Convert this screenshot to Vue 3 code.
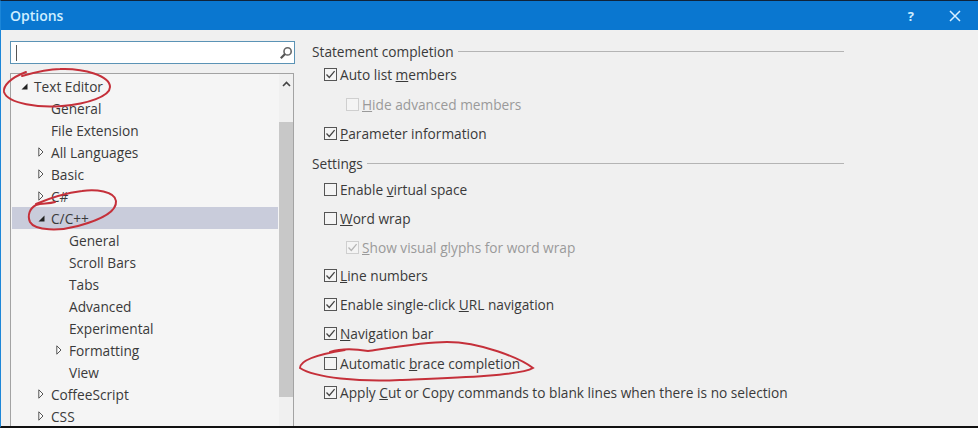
<template>
  <div class="dialog">
    <header class="titlebar">
      <span class="title">Options</span>
      <span class="help">?</span>
      <svg class="close" viewBox="0 0 12 12" width="12" height="12">
        <path d="M1 1l10 10M11 1L1 11" stroke="#d8f0ff" stroke-width="1.5" fill="none"/>
      </svg>
    </header>

    <div class="content">
      <aside class="left">
        <div class="search">
          <span class="caret"></span>
          <svg class="search-icon" viewBox="0 0 14 14" width="14" height="14">
            <circle cx="8.6" cy="5.4" r="3.6" fill="none" stroke="#666" stroke-width="1.6"/>
            <path d="M6 8L1.8 12.2" stroke="#555" stroke-width="2.2" fill="none"/>
          </svg>
        </div>

        <div class="tree">
          <div class="tree-list">
            <div
              v-for="node in nodes"
              :key="node.id"
              class="node"
              :class="['level-' + node.level, { selected: node.selected }]"
            >
              <span class="arrow-cell">
                <svg v-if="node.arrow === 'open'" viewBox="0 0 7 7" width="7" height="7">
                  <path d="M6.5 0.5V6.5H0.5z" fill="#222"/>
                </svg>
                <svg v-else-if="node.arrow === 'closed'" viewBox="0 0 6 10" width="6" height="10">
                  <path d="M0.8 0.8L5 5L0.8 9.2z" fill="#fff" stroke="#555" stroke-width="1"/>
                </svg>
              </span>
              <span class="node-label">{{ node.label }}</span>
            </div>
          </div>
          <div class="scrollbar">
            <svg class="scroll-up" viewBox="0 0 9 6" width="9" height="6">
              <path d="M1 5l3.5-3.5L8 5" fill="none" stroke="#444" stroke-width="1.6"/>
            </svg>
            <div class="thumb"></div>
          </div>
        </div>
      </aside>

      <main class="right">
        <template v-for="group in groups" :key="group.title">
          <div class="group-title" :class="group.cls">
            <span>{{ group.title }}</span>
            <span class="rule"></span>
          </div>
          <div
            v-for="opt in group.options"
            :key="opt.pre + opt.key + opt.post"
            class="option"
            :class="{ sub: opt.sub, disabled: opt.sub, tall: opt.tall, short: opt.short }"
          >
            <span class="box">
              <svg v-if="opt.checked" viewBox="0 0 11 11" width="11" height="11">
                <path d="M1.5 5.5L4.3 8.5L9.6 2.2" fill="none" :stroke="opt.sub ? '#b5b5b5' : '#444'" stroke-width="1.3"/>
              </svg>
            </span>
            <span class="option-label">{{ opt.pre }}<u>{{ opt.key }}</u>{{ opt.post }}</span>
          </div>
        </template>
      </main>
    </div>

    <!-- hand drawn red marks on top of the screenshot -->
    <svg class="marks" viewBox="0 0 978 428" width="978" height="428">
      <path d="M26 72C10 78 3 86 4 92C8 104 40 108 62 106C88 104 110 96 110 87C110 76 84 68 60 69C48 69 36 72 22 76"/>
      <path d="M55 202C48 204 42 203 36 205C30 208 27 215 30 222C35 231 60 231 78 226C100 220 117 212 116 201C115 191 95 189 82 191C66 193 50 198 36 204"/>
      <path d="M330 352C342 348 356 349 368 351C395 347 425 342 447 342C480 342 520 358 533 368C520 376 450 378 400 380C360 382 315 378 300 368C300 360 320 354 345 350"/>
    </svg>
  </div>
</template>

<script setup>
const nodes = [
  { label: 'Text Editor', level: 0, arrow: 'open' },
  { label: 'General', level: 1 },
  { label: 'File Extension', level: 1 },
  { label: 'All Languages', level: 1, arrow: 'closed' },
  { label: 'Basic', level: 1, arrow: 'closed' },
  { label: 'C#', level: 1, arrow: 'closed' },
  { label: 'C/C++', level: 1, arrow: 'open', selected: true },
  { label: 'General', level: 2 },
  { label: 'Scroll Bars', level: 2 },
  { label: 'Tabs', level: 2 },
  { label: 'Advanced', level: 2 },
  { label: 'Experimental', level: 2 },
  { label: 'Formatting', level: 2, arrow: 'closed' },
  { label: 'View', level: 2 },
  { label: 'CoffeeScript', level: 1, arrow: 'closed' },
  { label: 'CSS', level: 1, arrow: 'closed' }
].map((n, i) => ({ ...n, id: i }))

const groups = [
  {
    title: 'Statement completion',
    cls: 'first',
    options: [
      { pre: 'Auto list ', key: 'm', post: 'embers', checked: true },
      { pre: '', key: 'H', post: 'ide advanced members', sub: true, tall: true },
      { pre: '', key: 'P', post: 'arameter information', checked: true }
    ]
  },
  {
    title: 'Settings',
    cls: 'second',
    options: [
      { pre: 'Enable ', key: 'v', post: 'irtual space' },
      { pre: '', key: 'W', post: 'ord wrap' },
      { pre: '', key: 'S', post: 'how visual glyphs for word wrap', checked: true, sub: true, short: true },
      { pre: '', key: 'L', post: 'ine numbers', checked: true },
      { pre: 'Enable single-click ', key: 'U', post: 'RL navigation', checked: true },
      { pre: '', key: 'N', post: 'avigation bar', checked: true },
      { pre: 'Automatic ', key: 'b', post: 'race completion', tall: true },
      { pre: 'Apply ', key: 'C', post: 'ut or Copy commands to blank lines when there is no selection', checked: true }
    ]
  }
]
</script>

<style>
html, body {
  margin: 0;
  background: #f0f0f0;
}
</style>

<style scoped>
.dialog {
  position: relative;
  width: 978px;
  height: 428px;
  box-sizing: border-box;
  border-top: 1px solid #10233a;
  border-bottom: 2px solid #111;
  border-left: 1px solid #1c86d8;
  background: #f0f0f0;
  overflow: hidden;
  font-family: "Open Sans", "Noto Sans", sans-serif;
  font-size: 13.7px;
  color: #3a3a3a;
  display: flex;
  flex-direction: column;
}

.titlebar {
  flex: none;
  height: 29px;
  background: #0a77d0;
  display: flex;
  align-items: center;
  padding: 0 17px 0 9px;
  color: #cfeeff;
}

.title {
  font-size: 14px;
  font-weight: 600;
  flex: 1;
}

.help {
  font-size: 13px;
  font-weight: 700;
  margin-right: 35px;
}

.content {
  flex: 1;
  display: flex;
  min-height: 0;
}

.left {
  flex: none;
  width: 295px;
  padding: 11px 0 0 9px;
  box-sizing: border-box;
}

.search {
  height: 23px;
  width: 285px;
  box-sizing: border-box;
  border: 1px solid #5b93b5;
  background: #fff;
  display: flex;
  align-items: center;
  justify-content: space-between;
  padding: 0 1px 0 5px;
}

.caret {
  width: 1px;
  height: 16px;
  background: #555;
}

.search-icon {
  flex: none;
}

.tree {
  margin-top: 9px;
  height: 360px;
  width: 284px;
  box-sizing: border-box;
  border: 1px solid #a3a3a3;
  background: #f5f5f5;
  display: flex;
}

.tree-list {
  flex: 1;
  min-width: 0;
  padding: 1px 1px 0 1px;
}

.node {
  height: 22px;
  display: flex;
  align-items: center;
  white-space: nowrap;
}

.node.selected {
  background: #c9ccdb;
}

.arrow-cell {
  flex: none;
  width: 20px;
  display: flex;
  justify-content: center;
  align-items: center;
}

.level-0 { padding-left: 2px; }
.level-1 { padding-left: 19px; }
.level-2 { padding-left: 37px; }

.scrollbar {
  flex: none;
  width: 14px;
  background: #f0f0f0;
  display: flex;
  flex-direction: column;
  align-items: center;
}

.scroll-up {
  margin-top: 7px;
}

.thumb {
  width: 100%;
  height: 275px;
  margin-top: 35px;
  background: #c8c8c8;
}

.right {
  flex: 1;
  padding: 12px 134px 0 16px;
  min-width: 0;
}

.group-title {
  height: 18px;
  display: flex;
  align-items: center;
  gap: 4px;
  white-space: nowrap;
}

.group-title.second {
  margin-top: 6px;
  margin-bottom: 3px;
}

.rule {
  flex: 1;
  height: 1px;
  background: #b4b4b4;
}

.option {
  height: 29px;
  display: flex;
  align-items: center;
  gap: 3px;
  padding-left: 12px;
  white-space: nowrap;
}

.option.tall {
  height: 30px;
}

.option.short {
  height: 28px;
}

.option.sub {
  padding-left: 34px;
}

.option.disabled {
  color: #9a9a9a;
}

.box {
  flex: none;
  width: 13px;
  height: 13px;
  box-sizing: border-box;
  border: 1px solid #555;
  background: #f4f4f4;
  display: flex;
  align-items: center;
  justify-content: center;
}

.disabled .box {
  border-color: #cfcfcf;
}

.marks {
  position: absolute;
  left: -1px;
  top: -1px;
  pointer-events: none;
}

.marks path {
  fill: none;
  stroke: #c5303a;
  stroke-width: 2;
  stroke-linecap: round;
}
</style>
